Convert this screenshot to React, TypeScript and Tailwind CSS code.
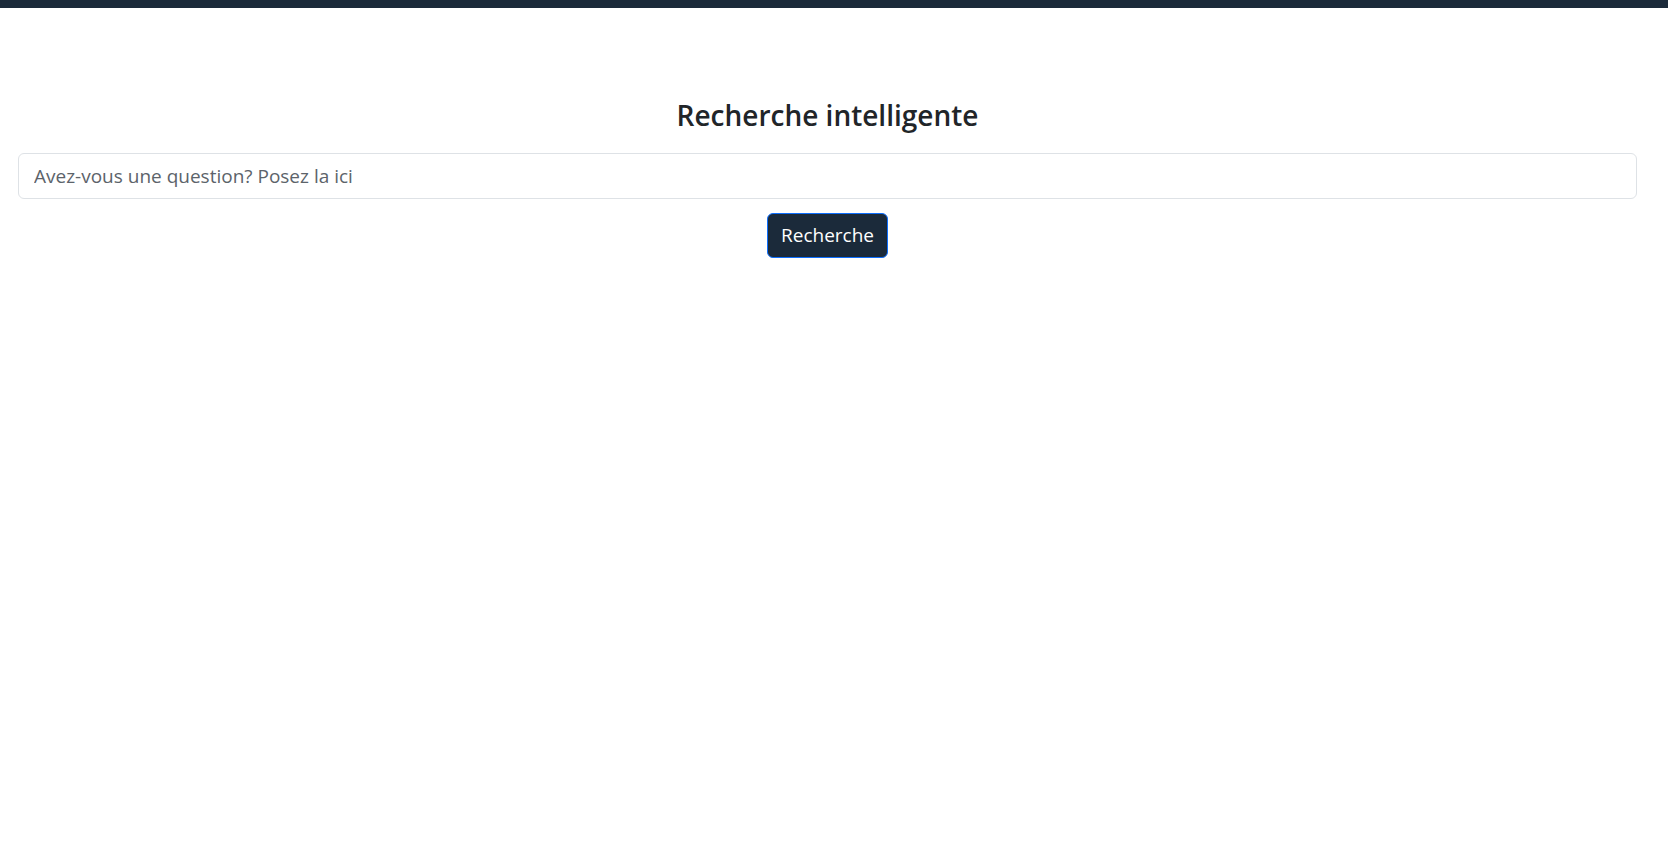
import { useState } from 'react';

const App = () => {
  const [query, setQuery] = useState('');

  return (
    <div className="min-h-screen bg-white font-['Open_Sans',sans-serif] text-[#212529]">
      <div className="h-2 w-full bg-[#1b2a3a]" />
      <div className="flex flex-col items-center pl-[18px] pr-[31px] pt-[87px]">
        <h3 className="mb-[18px] text-[28px] font-semibold leading-[40px]">
          Recherche intelligente
        </h3>
        <input
          type="text"
          value={query}
          onChange={(e) => setQuery(e.target.value)}
          placeholder="Avez-vous une question? Posez la ici"
          className="h-[46px] w-full rounded-[6px] border border-[#dee2e6] px-[15px] text-[19px] text-[#212529] outline-none placeholder:text-[#5c636a]"
        />
        <button className="mt-[14px] h-[45px] w-[121px] rounded-[6px] border border-[#0d6efd] bg-[#1b2a3a] text-[19px] text-white">
          Recherche
        </button>
      </div>
    </div>
  );
};

export default App;
